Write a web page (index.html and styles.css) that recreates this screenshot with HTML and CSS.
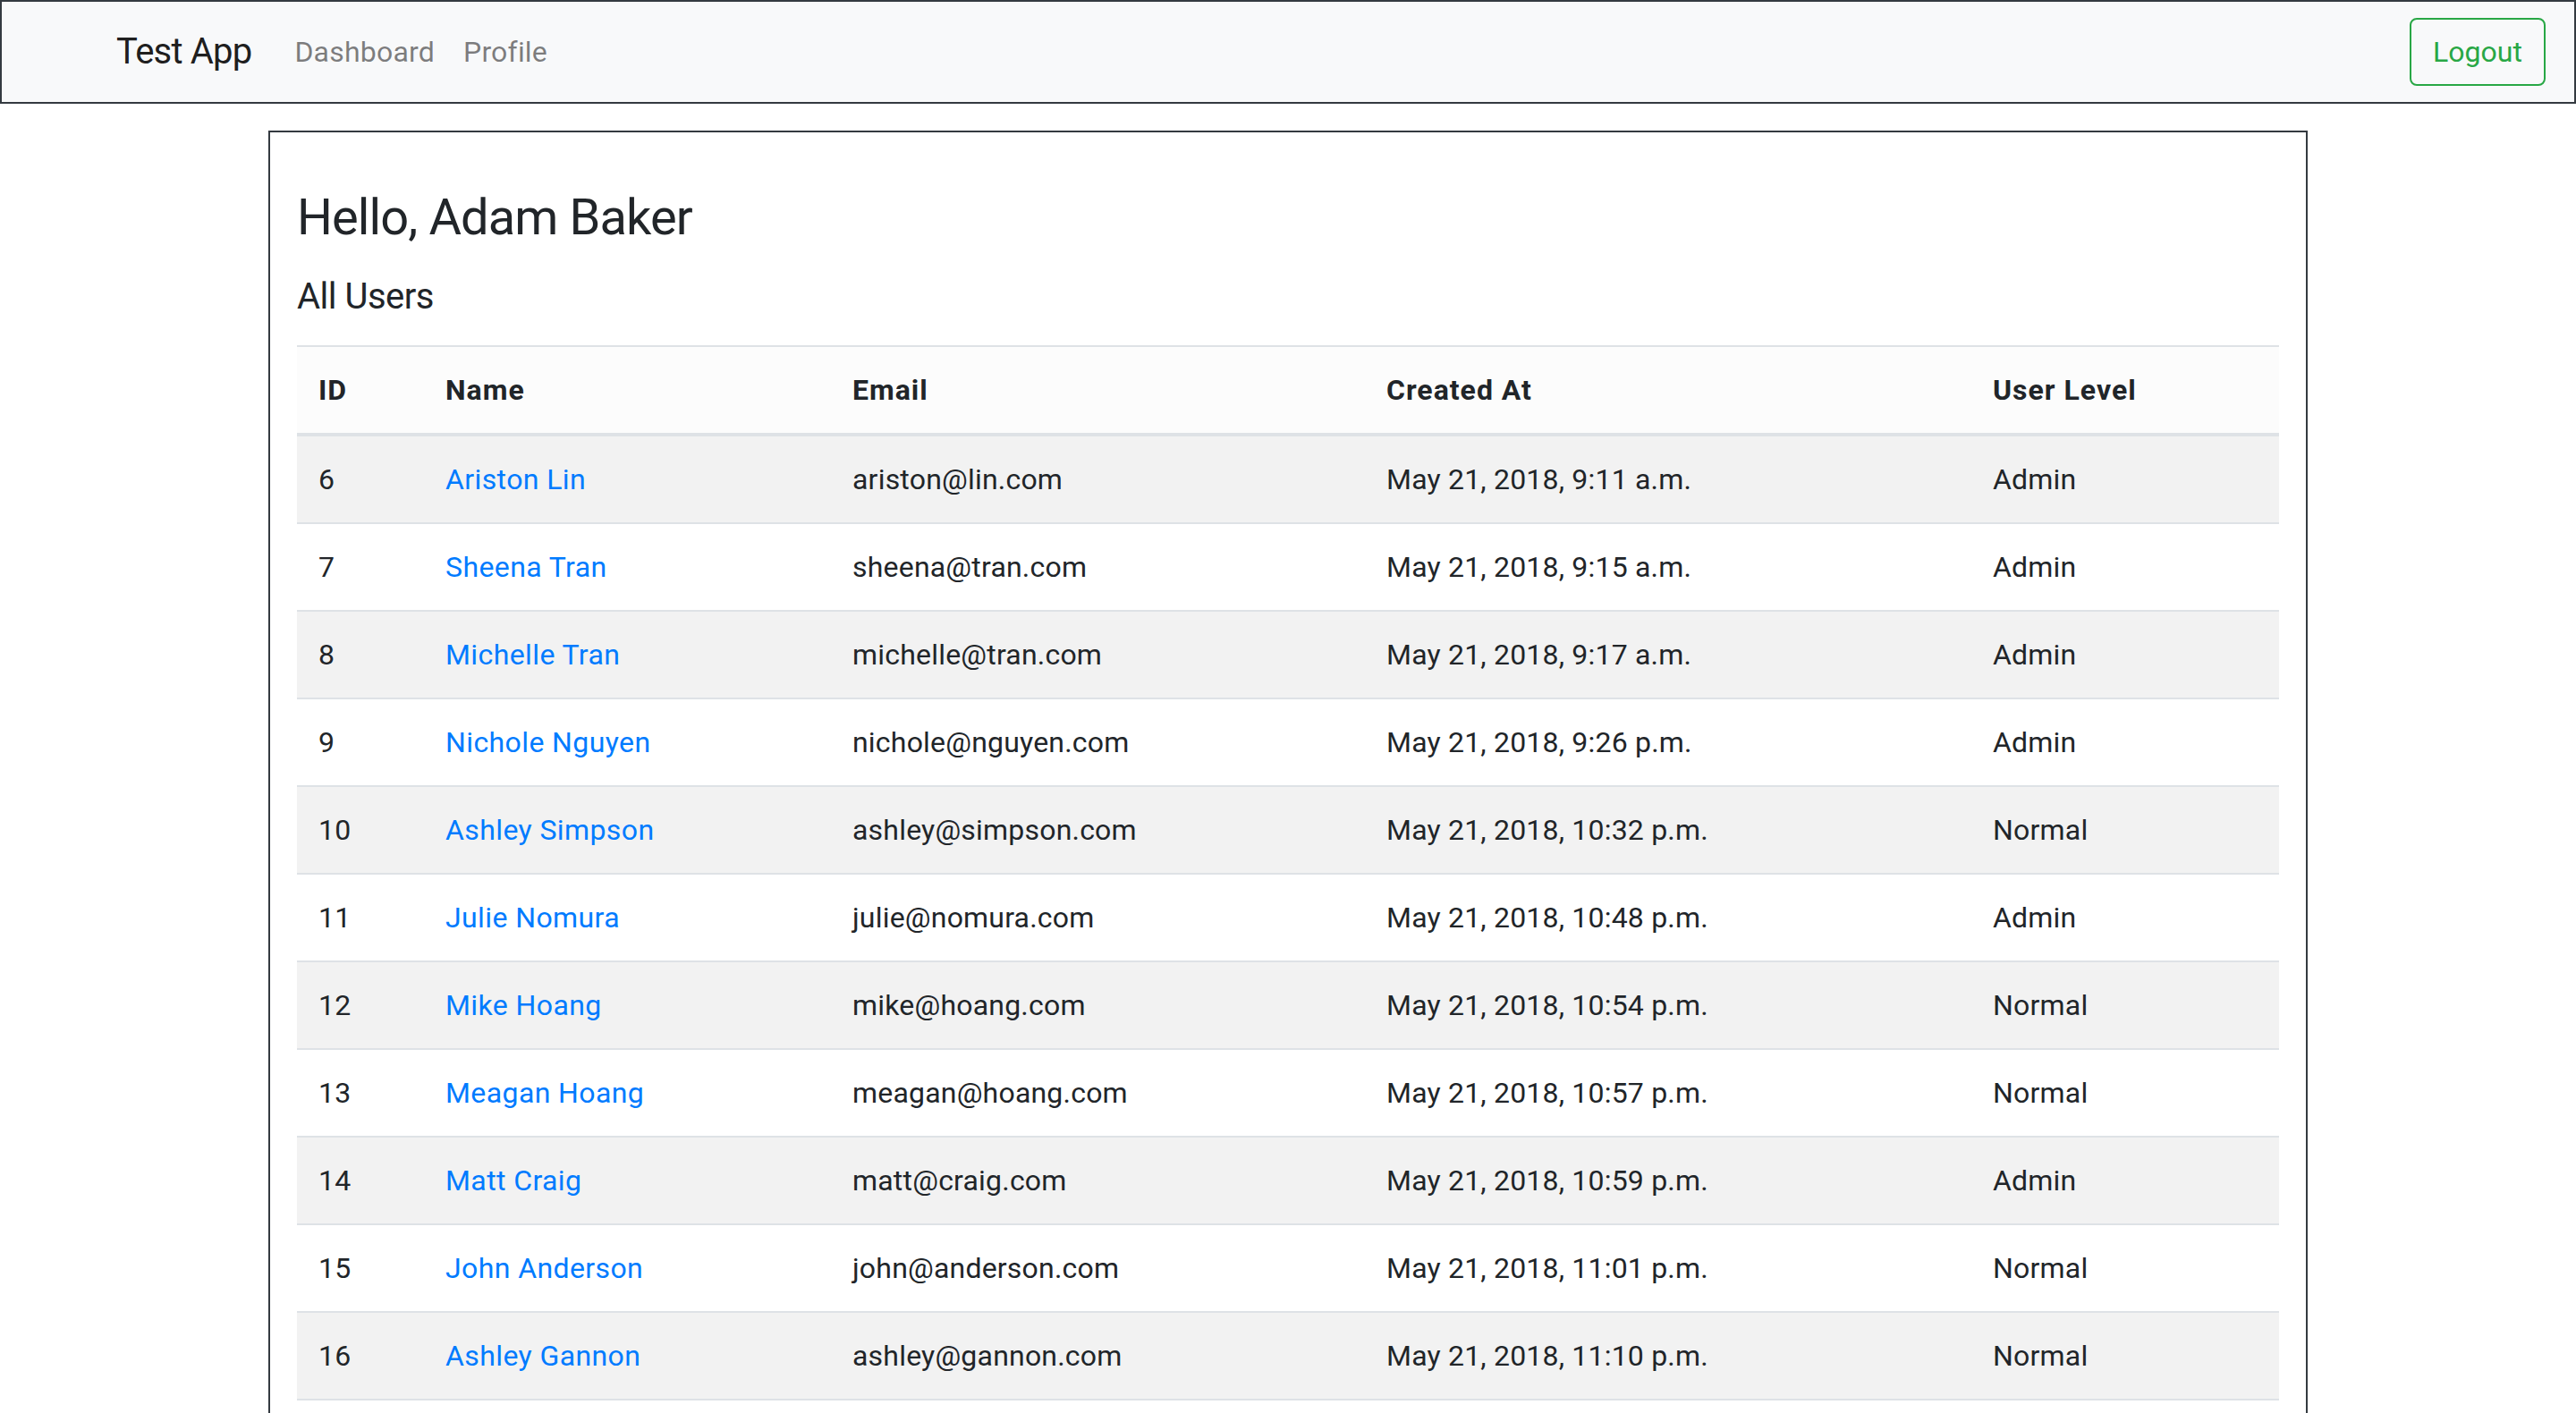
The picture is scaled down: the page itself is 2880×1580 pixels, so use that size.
FILE: index.html
```html
<!DOCTYPE html>
<html lang="en">
<head>
<meta charset="utf-8">
<title>Test App</title>
<link rel="stylesheet" href="styles.css">
</head>
<body>
<nav class="navbar">
  <a class="brand" href="#">Test App</a>
  <ul class="nav-links">
    <li><a class="nav-link" href="#">Dashboard</a></li>
    <li><a class="nav-link" href="#">Profile</a></li>
  </ul>
  <button class="btn-logout" type="button">Logout</button>
</nav>

<main class="container">
  <h3 class="greeting">Hello, Adam Baker</h3>
  <h5 class="section-title">All Users</h5>
  <table class="users">
    <colgroup>
      <col class="c-id"><col class="c-name"><col class="c-email"><col class="c-created"><col class="c-level">
    </colgroup>
    <thead>
      <tr><th>ID</th><th>Name</th><th>Email</th><th>Created At</th><th>User Level</th></tr>
    </thead>
    <tbody>
      <tr><td>6</td><td><a href="#">Ariston Lin</a></td><td>ariston@lin.com</td><td>May 21, 2018, 9:11 a.m.</td><td>Admin</td></tr>
      <tr><td>7</td><td><a href="#">Sheena Tran</a></td><td>sheena@tran.com</td><td>May 21, 2018, 9:15 a.m.</td><td>Admin</td></tr>
      <tr><td>8</td><td><a href="#">Michelle Tran</a></td><td>michelle@tran.com</td><td>May 21, 2018, 9:17 a.m.</td><td>Admin</td></tr>
      <tr><td>9</td><td><a href="#">Nichole Nguyen</a></td><td>nichole@nguyen.com</td><td>May 21, 2018, 9:26 p.m.</td><td>Admin</td></tr>
      <tr><td>10</td><td><a href="#">Ashley Simpson</a></td><td>ashley@simpson.com</td><td>May 21, 2018, 10:32 p.m.</td><td>Normal</td></tr>
      <tr><td>11</td><td><a href="#">Julie Nomura</a></td><td>julie@nomura.com</td><td>May 21, 2018, 10:48 p.m.</td><td>Admin</td></tr>
      <tr><td>12</td><td><a href="#">Mike Hoang</a></td><td>mike@hoang.com</td><td>May 21, 2018, 10:54 p.m.</td><td>Normal</td></tr>
      <tr><td>13</td><td><a href="#">Meagan Hoang</a></td><td>meagan@hoang.com</td><td>May 21, 2018, 10:57 p.m.</td><td>Normal</td></tr>
      <tr><td>14</td><td><a href="#">Matt Craig</a></td><td>matt@craig.com</td><td>May 21, 2018, 10:59 p.m.</td><td>Admin</td></tr>
      <tr><td>15</td><td><a href="#">John Anderson</a></td><td>john@anderson.com</td><td>May 21, 2018, 11:01 p.m.</td><td>Normal</td></tr>
      <tr><td>16</td><td><a href="#">Ashley Gannon</a></td><td>ashley@gannon.com</td><td>May 21, 2018, 11:10 p.m.</td><td>Normal</td></tr>
    </tbody>
  </table>
</main>
</body>
</html>
```
FILE: styles.css
```css
* { box-sizing: border-box; }

html, body {
  margin: 0;
  padding: 0;
  background: #fff;
}

body {
  font-family: Roboto, "Liberation Sans", Arial, sans-serif;
  font-size: 32px;
  line-height: 48px;
  color: #212529;
}

a { text-decoration: none; }

.navbar {
  display: flex;
  align-items: center;
  height: 116px;
  padding: 0 32px 0 128px;
  background: #f8f9fa;
  border: 2px solid #343a40;
}

.brand {
  font-size: 40px;
  line-height: 60px;
  padding: 10px 0;
  margin-right: 32px;
  color: rgba(0, 0, 0, 0.9);
  letter-spacing: -0.8px;
}

.nav-links {
  display: flex;
  list-style: none;
  margin: 0;
  padding: 0;
  flex: 1;
}

.nav-link {
  display: block;
  padding: 16px 16px;
  color: rgba(0, 0, 0, 0.5);
  letter-spacing: 0.2px;
}

.btn-logout {
  font-family: inherit;
  font-size: 32px;
  line-height: 48px;
  padding: 12px 24px;
  color: #28a745;
  background: transparent;
  border: 2px solid #28a745;
  border-radius: 8px;
  width: 152px;
}

.container {
  width: 2280px;
  margin: 30px auto 0;
  padding: 62px 30px 60px;
  border: 2px solid #343a40;
}

.greeting {
  font-size: 56px;
  line-height: 67px;
  font-weight: 400;
  letter-spacing: -0.9px;
  margin: 0 0 31px;
}

.section-title {
  font-size: 40px;
  line-height: 48px;
  font-weight: 400;
  letter-spacing: -0.5px;
  margin: 0 0 30px;
}

.users {
  width: 2216px;
  border-collapse: collapse;
  table-layout: fixed;
}

.c-id { width: 142px; }
.c-name { width: 455px; }
.c-email { width: 597px; }
.c-created { width: 678px; }
.c-level { width: 344px; }

.users th,
.users td {
  padding: 24px;
  text-align: left;
  vertical-align: top;
  border-top: 2px solid #dee2e6;
  white-space: nowrap;
}

.users td {
  letter-spacing: 0.2px;
}

.users th {
  font-weight: 700;
  letter-spacing: 1px;
  background: #fcfcfc;
  border-bottom: 4px solid #dee2e6;
}

.users tbody tr:nth-child(odd) td {
  background: #f2f2f2;
}

.users tbody tr:last-child td {
  border-bottom: 2px solid #dee2e6;
}

.users td a {
  color: #007bff;
  letter-spacing: 0.4px;
}
```
